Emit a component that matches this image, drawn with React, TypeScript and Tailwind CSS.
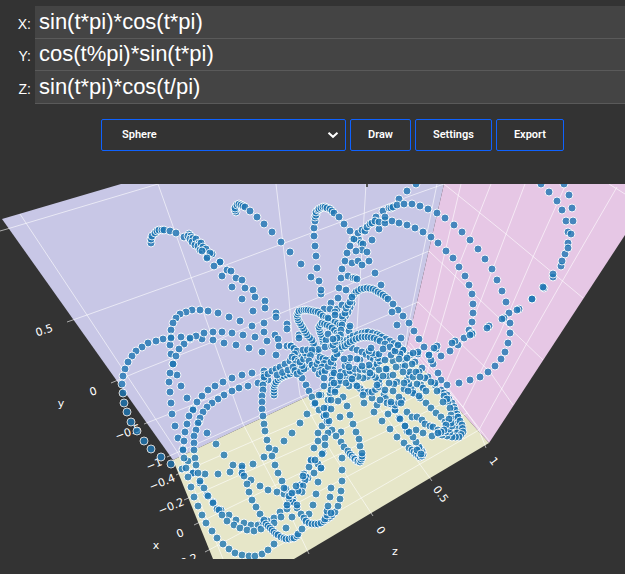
import { useState } from "react";

type Point = [number, number];

// Each trail lists marker centres; `steps` markers are placed per listed span.
type Trail = { steps: number; path: string };

const trails: Trail[] = [
  // upper left plumes
  { steps: 1, path: "151,243 151,239 152,236 155,233 157,231 159,230 162,230 164,230 170,231 176,233 184,237 189,234 188,236 191,236 190,239 193,238 192,242 196,239 195,245 199,243 198,246 201,243 200,250 203,247 206,249 202,251 207,257 212,254 210,253 207,258 220,262 220,262 214,266 222,276 227,270 231,271 232,287 236,278 242,280 245,288 253,290 242,299 255,297 265,301 253,311 265,308 264,323 276,313 276,317" },
  { steps: 1, path: "236,212 235,210 235,208 237,205 239,204 241,205 243,206 245,207 250,211 257,217 264,224 272,232 281,242 290,252 301,264 311,277" },
  { steps: 1, path: "321,294 321,290 319,281 317,268 316,256 315,246 314,236 314,228 315,221 315,217 316,215 316,212 318,210 319,209 321,208 323,207 325,207 327,208 330,209 332,211 334,213 339,217 344,224 350,231 353,239 356,240 359,240 361,243 363,244 362,250 367,252 369,261" },
  { steps: 1, path: "356,251 350,246 347,253 345,261 342,269 341,278 339,288 338,298 331,303 324,309 337,309 342,305 346,290 352,263 358,261 362,265 372,240 379,229 385,220 376,217 383,211 389,208 391,208 393,207 399,199 407,191 416,184 348,276 353,278 355,278 357,279 375,273 381,285" },
  // wide right hand loops
  { steps: 1, path: "354,239 358,233 362,230 365,231 367,227 370,224 372,223 375,221 379,222 385,223 385,217 392,221 399,223 407,225 415,228 423,232 431,237 438,243 446,251 453,258 459,267 465,276 469,285 472,294 473,304 473,313 472,322 469,330 472,333 464,338 458,345 450,351 441,356 433,364" },
  { steps: 1, path: "397,205 404,204 412,204 420,206 428,209 437,213 445,218 454,225 462,232 470,240 478,249 485,259 492,269 497,280 502,291 506,302 509,313 510,323 510,333 508,343 505,352 501,359 495,366 488,372 480,377 470,380 459,383 447,385 435,385 421,385" },
  { steps: 1, path: "541,184 549,192 557,201 562,210 566,221 568,232 568,243 565,254 561,266 553,277 544,288 532,299 519,309 504,318 489,326 472,334 455,341 436,349 418,354" },
  { steps: 1, path: "564,184 569,195 572,208 573,221 571,234 568,248 562,261 553,274 543,287 532,299 517,310 502,319 487,328 470,335 452,343 437,346 418,352 429,355 431,360 438,373 441,380 434,348" },
  // left loops
  { steps: 1, path: "252,326 240,321 229,317 218,313 208,311 200,310 192,310 186,312 180,314 176,318 173,323 171,330 171,337 170,345 171,354 173,364 177,375 181,386 187,398 193,409 199,422 207,433 216,444 224,455 233,465 242,473 251,480 260,486 268,490 277,492 284,494 291,495" },
  { steps: 1, path: "276,355 262,352 249,348 236,345 224,343 213,340 202,339 190,339 181,337 171,338 163,339 156,341 148,343 142,347 136,351 132,356 128,362 125,369 123,376 122,384 123,393 124,403 127,412 131,422 137,431 144,441 151,449 161,457 171,464 182,469 193,473 205,474 218,474 230,472 242,468 253,464 264,457 275,450 284,441 292,433 300,423 307,414 314,404 321,395 324,386" },
  { steps: 1, path: "267,341 255,337 243,335 232,333 222,332 213,332 204,333 196,336 190,338 184,344 179,349 176,356 173,364 170,373 169,382 170,392 171,403 172,414 175,426 178,438 183,449 188,461 193,473 200,483 207,495 213,502 221,510 229,515 236,520 244,523 251,525 258,525 263,522 268,521 274,518 280,512 287,505 293,499" },
  { steps: 1, path: "287,324 287,329 264,332 275,335 278,339 279,346 287,346 291,346 299,335 299,338" },
  { steps: 1, path: "264,371 252,373 242,375 232,378 223,382 215,386 208,390 202,396 197,402 193,410 189,416 187,424 185,432 184,441 183,450 184,458 186,468 188,477 191,487 194,497 198,506 202,515 206,523 212,531 217,538 223,544 229,549 235,553 242,555 249,556 255,556 262,554 268,550 274,544" },
  { steps: 1, path: "268,380 258,383 248,386 239,388 232,391 224,395 218,399 212,403 207,407 203,412 200,418 198,423 196,430 194,436 194,443 194,450 195,458 196,465 198,473 200,481 204,488 208,496 213,503 217,509 219,510 222,515 227,521 234,525 240,528 247,530 254,531 261,529 268,526 274,523 281,517 287,509 293,502" },
  // lower loops
  { steps: 1, path: "242,466 242,473 244,476 247,484 249,492 252,500 256,507 260,514 264,520 266,524 268,526 270,528 272,530 274,532 276,534 278,535 281,537 284,538 286,539 289,539 292,538 294,538 297,536 298,534 302,529 306,522 309,514 313,505 316,494 318,482 321,468 286,528 292,517" },
  { steps: 1, path: "264,375 264,380 263,385 263,390 262,396 262,402 262,409 263,416 264,424 265,431 267,440 269,448 272,456 275,465 278,473 282,481 286,489 290,496 293,502 297,508 301,514 304,518 306,521 309,523 312,524 315,524 318,524 321,523 324,521 327,519 330,517 332,515 335,512 338,506 340,499 341,491 342,481 342,470 342,458" },
  { steps: 1, path: "325,519 327,515 327,511 328,506 330,497 331,488 341,432 340,417 331,513" },
  { steps: 1, path: "274,395 274,392 274,389 274,386 275,384 276,382 278,380 280,378 282,377 284,376 287,375 290,374 293,372 297,371 302,378 306,385 309,391 312,397 315,404 319,410 324,416 328,423 332,430 336,436 341,442 344,447 348,451 350,454 352,456 354,458 355,459 357,461 358,461 360,462 361,460 362,458 362,456 362,453 360,446 359,439 356,432 353,424 350,415 347,406 343,397 338,401" },
  { steps: 1, path: "332,383 331,388 330,393 328,400 327,408 324,416 322,426 318,433 318,441 314,448 311,461 309,467 304,474 305,480 300,486 298,490 291,494" },
  { steps: 1, path: "328,433 325,438 325,445 323,453 322,454 318,464 321,468 314,473 308,478 306,477 305,480 303,476 300,485 303,486 302,492 298,491 296,486 289,499 287,505 297,505 289,496 292,493 284,488 327,421 329,421 331,409 324,408 326,415 319,395 315,403 311,460 315,460" },
  // small loops in the middle
  { steps: 2, path: "315,347 312,340 307,335 304,330 301,325 298,320 297,315 299,311 304,310 308,310 313,311 318,312 323,316 329,319 335,322 340,325" },
  { steps: 2, path: "323,342 322,337 320,332 319,327 322,323 327,325 332,328 337,333 340,337 343,342" },
  { steps: 2, path: "352,303 348,312 343,320 341,330 340,340 337,350 333,360 333,370 332,380 331,390" },
  { steps: 2, path: "352,297 356,292 361,289 367,288 373,289 378,292 383,295 388,299" },
  { steps: 1, path: "342,316 345,313 346,308 348,305 350,302 352,297 393,304 398,310 403,316 409,323 414,331 419,339 424,347 429,355 392,312 397,325 401,338 349,328 349,331 350,326 330,309 328,318 335,312 335,315 326,340 328,334 317,352" },
  { steps: 2, path: "264,377 272,371 280,367 290,361 300,357 312,352 325,347 338,345 352,348 362,352 370,357 377,362" },
  { steps: 2, path: "277,375 288,370 300,370 312,365 323,363 335,357 341,349" },
  { steps: 2, path: "291,346 297,351 292,357 298,361 293,367 297,374 304,369 300,362 307,356 303,350 312,350 309,361 315,369" },
  { steps: 2, path: "317,364 320,357 326,360 322,367 319,374 325,371 331,362 337,354 333,345 337,338" },
  // fan towards the lower right
  { steps: 2, path: "342,347 347,340 353,336 362,333 368,332 377,334 382,337 390,341 398,346 403,350" },
  { steps: 2, path: "345,346 350,342 356,339 362,337 368,337 374,338 380,341 390,347 400,354" },
  { steps: 1, path: "403,350 410,355 415,362 422,368 428,377 435,383 441,390 444,393 447,395 449,399 452,403 454,407 455,410 457,414 458,417" },
  { steps: 1, path: "400,354 405,360 412,364 419,372 425,378 431,382 437,391 444,396 448,402 450,408 451,415 454,419 457,424 458,429 457,433 447,399 443,402" },
  { steps: 2, path: "458,417 462,425 463,432 459,437 452,437 442,435" },
  { steps: 1, path: "437,433 432,436 423,433 416,430 407,431 405,426 400,418 395,410 420,398 426,403 431,408 436,413 441,417 445,422 448,427 450,432" },
  { steps: 1, path: "407,412 412,417 417,417 422,420 425,424 430,426 433,427 438,430 442,432 446,432 449,429 452,426 451,423 449,419 446,425 444,430 441,432 438,433" },
  { steps: 1, path: "374,412 382,421 390,429 397,437 404,443 409,448 412,450 414,452 416,454 418,455 420,457 422,456 423,454 422,451 420,449 419,447 416,442 413,437 409,432 405,426 399,418 395,410 388,414 377,405 364,403 372,398 417,450 421,454 400,419" },
  { steps: 2, path: "341,372 348,378 356,385 364,392 372,392 379,387 379,380 372,375 363,378 353,375 345,366 350,358" },
  { steps: 2, path: "384,394 387,403 395,405 402,400" },
  { steps: 2, path: "406,387 415,394 411,388 407,380" },
  { steps: 2, path: "335,390 340,380 345,373 355,369 365,370 374,367 380,361 376,355 369,351" },
  { steps: 1, path: "360,360 369,365 379,370 388,376 397,382 404,389 413,393 419,396" },
  { steps: 1, path: "362,366 370,373 383,376 394,384 404,383 409,375 402,367 393,361" },
  { steps: 1, path: "371,348 379,354 383,349 385,360 387,369 386,369 393,375 396,367 399,359 405,366 407,358 410,372 413,377 391,355 395,351 403,372 416,372 420,377 417,384 423,388 426,391 363,395 349,386 340,381 357,359 385,390 393,391 399,397 380,400 391,402 401,403 408,391 398,345 413,353 389,383 377,385 344,359 349,367 333,339 334,373 324,378" },
  { steps: 1, path: "331,400 335,392 334,383 340,376 346,383 352,379 357,386" },
];

const parse = (path: string): Point[] =>
  path.split(" ").map((pair) => pair.split(",").map(Number) as Point);

const markers: Point[] = trails.flatMap(({ steps, path }) =>
  parse(path).flatMap((from, i, all) => {
    const to = all[i + 1];
    if (!to) return [from];
    return Array.from({ length: steps }, (_, k): Point => [
      from[0] + ((to[0] - from[0]) * k) / steps,
      from[1] + ((to[1] - from[1]) * k) / steps,
    ]);
  }),
);

const gridLines = [
  // back wall
  "0,231 7,229 158,184",
  "67,322 87,315 210,271 410,196 444,184",
  "111,383 142,370 210,343 410,259 429,251",
  "144,424 210,398 357,328 418,302",
  "167,457 210,438 327,385 406,348",
  "20,214 87,315 178,453",
  "158,184 191,277 243,424",
  "276,184 288,287 293,347 300,395",
  "366,184 363,233 357,328 354,374",
  "437,184 408,327 405,350",
  // right wall
  "461,184 433,303 416,360",
  "491,184 457,270 427,373",
  "525,184 481,300 442,392",
  "566,184 533,257 500,333 463,407",
  "617,187 563,280 527,343 479,430",
  "444,184 506,234 583,298",
  "429,251 478,298 543,360",
  "418,302 490,372 513,405",
  "410,343 448,388 489,441",
  "609,184 625,194",
  // floor
  "486,448 479,430 463,407 408,346",
  "432,481 419,463 357,376",
  "373,516 332,453 300,395",
  "309,554 287,508 243,424",
  "223,559 200,502 178,453",
  "176,475 425,366",
  "184,500 437,387",
  "194,525 454,398",
  "205,552 467,413",
  "256,559 363,497 479,430",
];

const tickLabels = [
  { x: 44, y: 330, turn: -18, text: "0.5" },
  { x: 93, y: 391, turn: -18, text: "0" },
  { x: 128, y: 432, turn: -20, text: "−0.5" },
  { x: 154, y: 464, turn: -22, text: "−1" },
  { x: 162, y: 482, turn: -22, text: "−0.4" },
  { x: 171, y: 506, turn: -22, text: "−0.2" },
  { x: 180, y: 533, turn: -22, text: "0" },
  { x: 189, y: 560, turn: -22, text: "0.2" },
  { x: 494, y: 461, turn: 52, text: "1" },
  { x: 441, y: 494, turn: 54, text: "0.5" },
  { x: 381, y: 530, turn: 58, text: "0" },
  { x: 61, y: 403, turn: 0, text: "y" },
  { x: 156, y: 545, turn: 0, text: "x" },
  { x: 395, y: 551, turn: 0, text: "z" },
];

function Plot() {
  return (
    <svg
      viewBox="0 184 625 375"
      className="block w-full"
      role="img"
      aria-label="3D scatter plot"
    >
      <polygon points="2,219 121,184 444,184 406,350 173,460" fill="#c8c7e6" />
      <polygon points="444,184 625,184 625,235 489,443 406,350" fill="#e6c7e5" />
      <polygon points="173,460 406,350 489,443 294,559 213,559" fill="#e6e6c8" />
      <g fill="none" stroke="#ffffff" strokeOpacity="0.6" strokeWidth="1">
        {gridLines.map((points) => (
          <polyline key={points} points={points} />
        ))}
      </g>
      <path d="M367 184v3" stroke="#555555" strokeWidth="2" />
      <g
        fill="#ffffff"
        fontFamily="'DejaVu Sans', Verdana, sans-serif"
        fontSize="11"
        textAnchor="middle"
      >
        {tickLabels.map(({ x, y, turn, text }) => (
          <text
            key={`${x}-${y}`}
            dy="4"
            transform={`translate(${x} ${y}) rotate(${turn})`}
          >
            {text}
          </text>
        ))}
      </g>
      {markers.map(([x, y], i) => (
        <circle
          key={i}
          cx={x}
          cy={y}
          r="4"
          fill="#1f77b4"
          stroke="#ffffff"
          strokeWidth="1"
          opacity="0.8"
        />
      ))}
    </svg>
  );
}

function FormulaField({
  axis,
  value,
  onChange,
}: {
  axis: string;
  value: string;
  onChange: (value: string) => void;
}) {
  const id = `formula-${axis}`;
  return (
    <div className="flex items-baseline">
      <label htmlFor={id} className="w-[35px] pr-1 text-right text-sm leading-4">
        {axis}:
      </label>
      <input
        id={id}
        type="text"
        value={value}
        onChange={(e) => onChange(e.target.value)}
        className="h-full min-w-0 flex-1 border-b border-[#5a5a5a] bg-[#444444] px-1 text-[22px] outline-none"
      />
    </div>
  );
}

const controlClass =
  "h-8 rounded-xs border border-[#0f62fe] bg-[#333333] px-[17px] font-[Roboto,Arial,sans-serif] text-[11px] font-semibold text-white";

export default function App() {
  const [formulas, setFormulas] = useState<Record<string, string>>({
    X: "sin(t*pi)*cos(t*pi)",
    Y: "cos(t%pi)*sin(t*pi)",
    Z: "sin(t*pi)*cos(t/pi)",
  });

  return (
    <main className="min-h-screen overflow-hidden bg-[#333333] pt-1.5 font-['Liberation_Sans',Arial,sans-serif] text-white">
      <form className="grid h-[98px] grid-rows-3">
        {Object.keys(formulas).map((axis) => (
          <FormulaField
            key={axis}
            axis={axis}
            value={formulas[axis]}
            onChange={(value) => setFormulas({ ...formulas, [axis]: value })}
          />
        ))}
      </form>
      <div className="mt-[15px] mb-[33px] flex justify-center gap-1 pl-10">
        <div className="relative w-[245px]">
          <select
            aria-label="Shape"
            defaultValue="Sphere"
            className={`${controlClass} w-full appearance-none pl-5`}
          >
            <option>Sphere</option>
            <option>Cube</option>
            <option>Torus</option>
          </select>
          <svg
            viewBox="0 0 12 8"
            className="pointer-events-none absolute top-3 right-[7px] h-2 w-3"
            fill="none"
            stroke="#ffffff"
            strokeWidth="2"
          >
            <path d="M1.500 1.800 6 5.800l4.500-4" />
          </svg>
        </div>
        <button type="button" className={controlClass}>Draw</button>
        <button type="button" className={controlClass}>Settings</button>
        <button type="button" className={controlClass}>Export</button>
      </div>
      <Plot />
    </main>
  );
}
